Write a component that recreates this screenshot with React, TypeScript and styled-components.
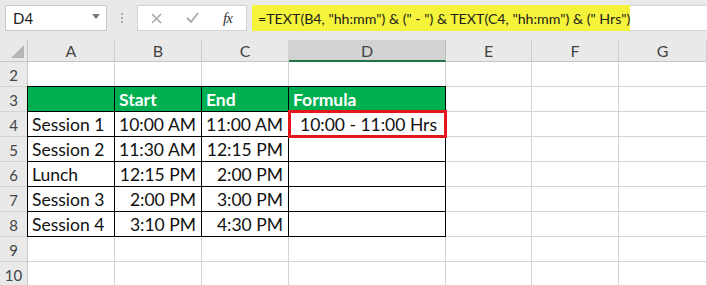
import styled, { createGlobalStyle } from "styled-components"

const GlobalStyle = createGlobalStyle`
    html, body {
        margin: 0;
        padding: 0;
        background: #ffffff;
        overflow: hidden;
    }
    * {
        box-sizing: border-box;
    }
`

const FONT = `Lato, "Open Sans", "Liberation Sans", sans-serif`

const Window = styled.div`
    width: 707px;
    height: 285px;
    overflow: hidden;
    font-family: ${FONT};
    background: #ffffff;
`

const Toolbar = styled.div`
    height: 40px;
    display: flex;
    align-items: flex-start;
    padding-top: 5px;
    background: #e9e9e9;
`

const NameBox = styled.div`
    margin-left: 5px;
    width: 102px;
    height: 26px;
    background: #ffffff;
    border: 1px solid #c9c9c9;
    display: flex;
    align-items: center;
    justify-content: space-between;
    padding: 0 6px 0 7px;
    font-size: 15px;
    color: #222;
`

const Caret = styled.span`
    width: 0;
    height: 0;
    border-left: 4px solid transparent;
    border-right: 4px solid transparent;
    border-top: 5px solid #7a7a7a;
    margin-top: -3px;
`

const Grip = styled.div`
    width: 30px;
    height: 26px;
    display: flex;
    flex-direction: column;
    align-items: center;
    justify-content: center;
    gap: 2px;

    span {
        width: 2px;
        height: 2px;
        background: #a8a8a8;
    }
`

const FxBox = styled.div`
    width: 110px;
    height: 26px;
    background: #ffffff;
    border: 1px solid #d2d2d2;
    display: flex;
    align-items: center;
    padding-left: 13px;
`

const FxLabel = styled.span`
    font-family: "Liberation Serif", "DejaVu Serif", serif;
    font-style: italic;
    font-size: 15px;
    color: #333;
    margin-left: 24px;
    letter-spacing: -1px;
`

const FormulaBox = styled.div`
    margin-left: 5px;
    flex: 1;
    height: 26px;
    background: #ffffff;
    border-top: 1px solid #d2d2d2;
    border-bottom: 1px solid #d2d2d2;
    display: flex;
    align-items: stretch;
`

const Highlight = styled.div`
    background: #f5f43a;
    width: 378px;
    display: flex;
    align-items: center;
    padding-left: 6px;
    font-size: 14.2px;
    color: #1d1d1d;
    white-space: nowrap;
    margin-top: -1px;
    margin-bottom: -1px;
`

const Sheet = styled.div`
    display: grid;
    grid-template-columns: 28px 87px 87px 87px 157px 86px 87px 88px;
    grid-template-rows: 22px repeat(9, 25px);
`

const Corner = styled.div`
    background: #e9e9e9;
    border-right: 1px solid #c6c6c6;
    border-bottom: 1px solid #c6c6c6;
    position: relative;

    &::after {
        content: "";
        position: absolute;
        right: 3px;
        bottom: 3px;
        width: 0;
        height: 0;
        border-left: 13px solid transparent;
        border-bottom: 13px solid #b7b7b7;
    }
`

const ColHeader = styled.div<{ $active?: boolean }>`
    background: ${p => (p.$active ? "#d3d3d3" : "#e9e9e9")};
    border-right: 1px solid ${p => (p.$active ? "#bcbcbc" : "#cfcfcf")};
    border-bottom: ${p => (p.$active ? "2px solid #217346" : "1px solid #c6c6c6")};
    display: flex;
    align-items: center;
    justify-content: center;
    font-size: 16px;
    color: #444;
`

const RowHeader = styled.div`
    background: #e9e9e9;
    border-right: 1px solid #c6c6c6;
    border-bottom: 1px solid #d4d4d4;
    display: flex;
    align-items: center;
    justify-content: center;
    font-size: 15px;
    color: #444;
    padding-top: 2px;
`

const Cell = styled.div<{
    $table?: boolean
    $head?: boolean
    $right?: boolean
    $first?: boolean
    $top?: boolean
    $selected?: boolean
}>`
    position: relative;
    background: ${p => (p.$head ? "#00b050" : "#ffffff")};
    border-right: 1px solid ${p => (p.$table ? "#000000" : "#d4d4d4")};
    border-bottom: 1px solid ${p => (p.$table ? "#000000" : "#d4d4d4")};
    box-shadow: ${p =>
        p.$first && p.$top
            ? "-1px 0 0 #000, 0 -1px 0 #000, -1px -1px 0 #000"
            : p.$first
            ? "-1px 0 0 #000"
            : p.$top
            ? "0 -1px 0 #000"
            : "none"};
    display: flex;
    align-items: flex-end;
    justify-content: ${p => (p.$right ? "flex-end" : "flex-start")};
    padding: 0 5px 1px 4px;
    font-size: 17.5px;
    font-weight: ${p => (p.$head ? 700 : 400)};
    color: ${p => (p.$head ? "#ffffff" : "#111111")};
    white-space: nowrap;
    z-index: ${p => (p.$selected ? 2 : 1)};

    ${p =>
        p.$selected &&
        `
        &::after {
            content: "";
            position: absolute;
            left: -1px;
            top: -2px;
            right: -2px;
            bottom: -2px;
            border: 3px solid #e3161c;
        }
        padding-left: 11px;
    `}
`

const XIcon = () => (
    <svg width="11" height="11" viewBox="0 0 11 11">
        <path d="M1 1 L10 10 M10 1 L1 10" stroke="#a9a9a9" strokeWidth="1.6" fill="none" />
    </svg>
)

const CheckIcon = () => (
    <svg width="13" height="12" viewBox="0 0 13 12" style={{ marginLeft: 24 }}>
        <path d="M1 6 L5 10 L12 1" stroke="#a9a9a9" strokeWidth="1.8" fill="none" />
    </svg>
)

type Row = { n: number; cells: string[] }

const columns = ["A", "B", "C", "D", "E", "F", "G"]

const rows: Row[] = [
    { n: 2, cells: ["", "", "", "", "", "", ""] },
    { n: 3, cells: ["", "Start", "End", "Formula", "", "", ""] },
    { n: 4, cells: ["Session 1", "10:00 AM", "11:00 AM", "10:00 - 11:00 Hrs", "", "", ""] },
    { n: 5, cells: ["Session 2", "11:30 AM", "12:15 PM", "", "", "", ""] },
    { n: 6, cells: ["Lunch", "12:15 PM", "2:00 PM", "", "", "", ""] },
    { n: 7, cells: ["Session 3", "2:00 PM", "3:00 PM", "", "", "", ""] },
    { n: 8, cells: ["Session 4", "3:10 PM", "4:30 PM", "", "", "", ""] },
    { n: 9, cells: ["", "", "", "", "", "", ""] },
    { n: 10, cells: ["", "", "", "", "", "", ""] },
]

export default function App() {
    return (
        <Window>
            <GlobalStyle />
            <Toolbar>
                <NameBox>
                    D4
                    <Caret />
                </NameBox>
                <Grip>
                    <span />
                    <span />
                    <span />
                </Grip>
                <FxBox>
                    <XIcon />
                    <CheckIcon />
                    <FxLabel>fx</FxLabel>
                </FxBox>
                <FormulaBox>
                    <Highlight>
                        =TEXT(B4, "hh:mm") &amp; (" - ") &amp; TEXT(C4, "hh:mm") &amp; (" Hrs")
                    </Highlight>
                </FormulaBox>
            </Toolbar>

            <Sheet>
                <Corner />
                {columns.map(c => (
                    <ColHeader key={c} $active={c === "D"}>
                        {c}
                    </ColHeader>
                ))}

                {rows.map(row => {
                    const inTable = row.n >= 3 && row.n <= 8
                    return [
                        <RowHeader key={`h${row.n}`}>{row.n}</RowHeader>,
                        ...row.cells.map((text, i) => {
                            const table = inTable && i < 4
                            return (
                                <Cell
                                    key={`${row.n}-${i}`}
                                    $table={table}
                                    $head={table && row.n === 3}
                                    $right={table && row.n > 3 && (i === 1 || i === 2)}
                                    $first={table && i === 0}
                                    $top={table && row.n === 3}
                                    $selected={row.n === 4 && i === 3}
                                >
                                    {text}
                                </Cell>
                            )
                        }),
                    ]
                })}
            </Sheet>
        </Window>
    )
}
